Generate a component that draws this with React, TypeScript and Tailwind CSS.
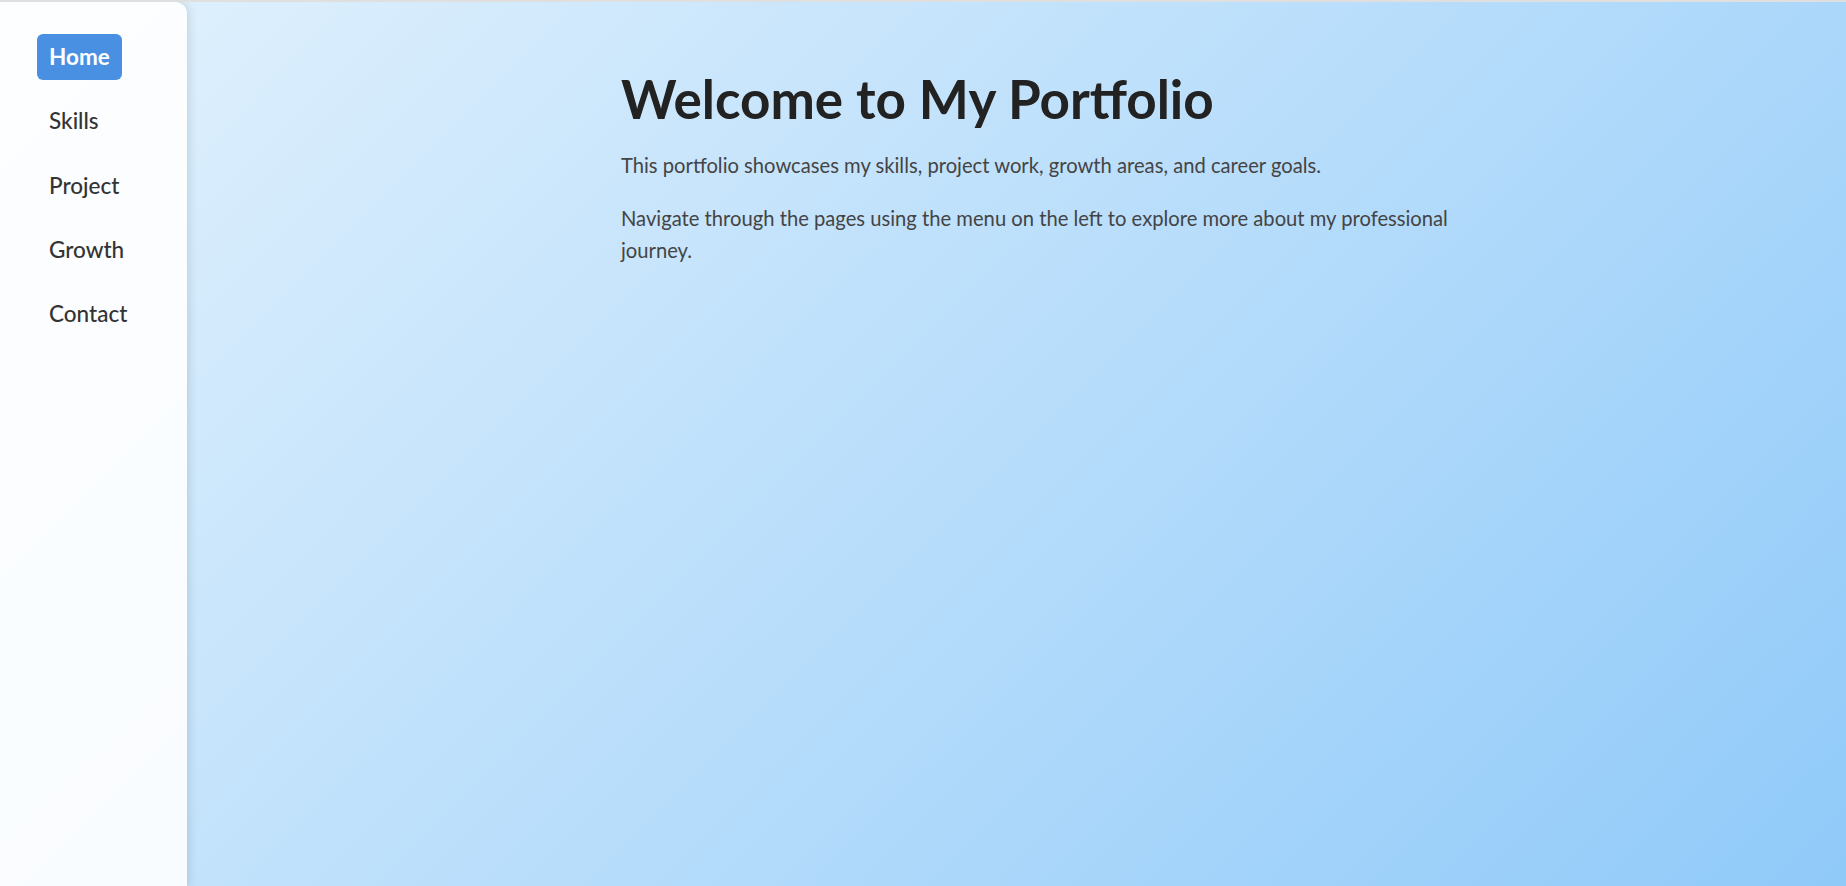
import React from "react";

const items = ["Home", "Skills", "Project", "Growth", "Contact"];

export default function App() {
  return (
    <div
      className="w-[1846px] h-[886px] overflow-hidden border-t-2 border-[#dfdfdf] flex bg-[linear-gradient(135deg,#e3f2fd,#90caf9)] text-[#333]"
      style={{ fontFamily: 'Lato, "Noto Sans", sans-serif' }}
    >
      <aside className="w-[187px] shrink-0 h-full bg-white/90 rounded-tr-[12px] shadow-[2px_0_10px_rgba(0,0,0,0.12)] pt-[32px] pl-[37px] flex flex-col gap-[18.3px]">
        {items.map((it, i) => (
          <div
            key={it}
            className={
              "h-[46px] px-[12px] flex items-center self-start rounded-[6px] text-[22.5px] " +
              (i === 0 ? "bg-[#4a90e2] text-white font-bold" : "text-[#333] font-medium")
            }
          >
            {it}
          </div>
        ))}
      </aside>
      <main className="flex-1 pl-[434px] pt-[64.5px]">
        <div className="w-[860px]">
          <h1 className="text-[53px] font-bold text-[#222] leading-[1.2]">Welcome to My Portfolio</h1>
          <p className="mt-[19px] text-[20.2px] leading-[32px] text-[#444]">
            This portfolio showcases my skills, project work, growth areas, and career goals.
          </p>
          <p className="mt-[20.7px] text-[20.2px] leading-[32px] text-[#444]">
            Navigate through the pages using the menu on the left to explore more about my professional journey.
          </p>
        </div>
      </main>
    </div>
  );
}
